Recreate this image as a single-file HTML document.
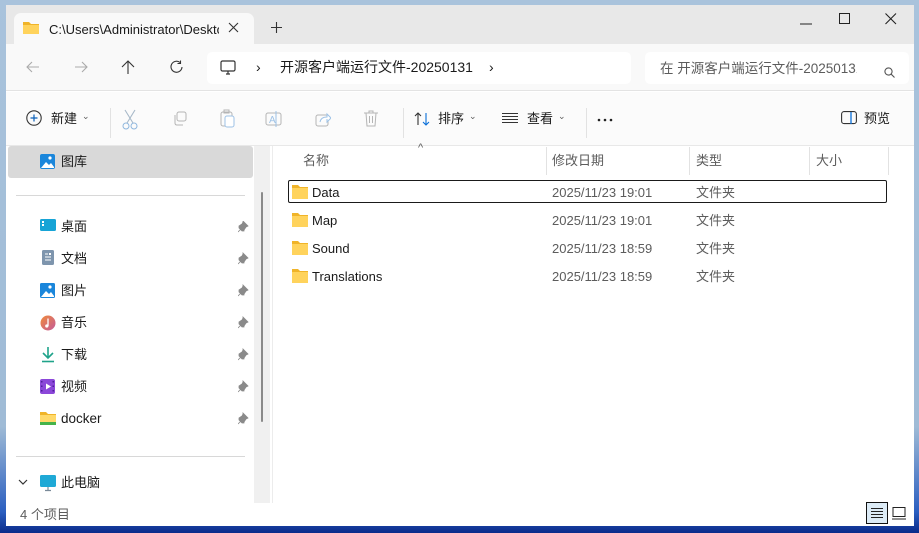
<!DOCTYPE html>
<html><head><meta charset="utf-8"><style>
*{margin:0;padding:0;box-sizing:border-box}
body{width:919px;height:533px;overflow:hidden;position:relative;font-family:"Liberation Sans","Noto Sans CJK SC",sans-serif;font-size:13px;color:#1a1a1a;background:linear-gradient(180deg,#a9c3dc 0%,#9fbbd6 80%,#2b5fc0 96%,#0a2a8a 100%)}
.a{position:absolute}
.win{left:6px;top:5px;width:908px;height:521px;background:#fff;overflow:hidden}
.title{left:0;top:0;width:908px;height:39px;background:#e8e8e8}
.tab{left:8px;top:8px;width:240px;height:32px;background:#f9f9f9;border-radius:7px 7px 0 0}
.nav{left:0;top:39px;width:908px;height:47px;background:#f9f9f9;border-bottom:1px solid #e3e3e3}
.box{background:#fff;border-radius:5px}
.tool{left:0;top:87px;width:908px;height:54px;background:#fbfbfb;border-bottom:1px solid #e8e8e8}
.t{position:absolute;white-space:nowrap;line-height:15px}
.g{color:#5c5c5c}
.sep{position:absolute;width:1px;background:#e2e2e2}
svg{position:absolute}
</style></head><body>
<div class="a win">
 <div class="a title"></div>
 <div class="a tab"></div>
 <svg style="left:17px;top:16px" width="16" height="13"><path d="M0 1h6l2 2h8v10H0z" fill="#f0b429"/><rect x="0" y="4" width="16" height="9" fill="#ffd35c"/></svg>
 <div class="t" style="left:43px;top:17px;width:170px;overflow:hidden">C:\Users\Administrator\Desktop</div>
 <svg style="left:222px;top:17px" width="11" height="11"><path d="M1 1L10 10M10 1L1 10" stroke="#333" stroke-width="1.1"/></svg>
 <svg style="left:265px;top:17px" width="11" height="11"><path d="M5.5 0V11M0 5.5H11" stroke="#333" stroke-width="1.1"/></svg>
 <svg style="left:794px;top:18px" width="12" height="2"><path d="M0 1H12" stroke="#222"/></svg>
 <svg style="left:833px;top:8px" width="12" height="12"><rect x="0.5" y="0.5" width="10" height="10" fill="none" stroke="#222"/></svg>
 <svg style="left:879px;top:8px" width="12" height="12"><path d="M0.5 0.5L11 11M11 0.5L0.5 11" stroke="#222" stroke-width="1.1"/></svg>

 <div class="a nav"></div>
 <svg style="left:20px;top:56px" width="14" height="12"><path d="M13 6H1M6 1L1 6L6 11" fill="none" stroke="#aaa" stroke-width="1.1"/></svg>
 <svg style="left:68px;top:56px" width="14" height="12"><path d="M1 6H13M8 1L13 6L8 11" fill="none" stroke="#aaa" stroke-width="1.1"/></svg>
 <svg style="left:115px;top:55px" width="14" height="14"><path d="M7 14V1M1 7L7 1L13 7" fill="none" stroke="#333" stroke-width="1.1"/></svg>
 <svg style="left:164px;top:55px" width="14" height="14"><path d="M12 7A5.5 5.5 0 1 1 10 2.5M10.5 0.5V3.5H7.5" fill="none" stroke="#333" stroke-width="1.1"/></svg>
 <div class="a box" style="left:201px;top:47px;width:424px;height:32px"></div>
 <svg style="left:214px;top:55px" width="17" height="16"><rect x="1" y="1" width="14" height="10" rx="1.5" fill="none" stroke="#333" stroke-width="1.2"/><path d="M6 14H10M8 11V14" stroke="#333" stroke-width="1.2"/></svg>
 <div class="t" style="left:250px;top:55px;font-size:14px">›</div>
 <div class="t" style="left:274px;top:55px;font-size:14px">开源客户端运行文件-20250131</div>
 <div class="t" style="left:483px;top:55px;font-size:14px">›</div>
 <div class="a box" style="left:639px;top:47px;width:264px;height:32px"></div>
 <div class="t g" style="left:654px;top:56px;font-size:13.5px;width:197px;overflow:hidden">在 开源客户端运行文件-20250131</div>
 <svg style="left:878px;top:62px" width="11" height="11"><circle cx="4.5" cy="4.5" r="3.6" fill="none" stroke="#555" stroke-width="1.1"/><path d="M7.2 7.2L10.5 10.5" stroke="#555" stroke-width="1.1"/></svg>

 <div class="a tool"></div>
 <svg style="left:20px;top:105px" width="17" height="17"><circle cx="8" cy="8" r="7.2" fill="none" stroke="#333" stroke-width="1.1"/><path d="M8 4.5V11.5M4.5 8H11.5" stroke="#0a5fb8" stroke-width="1.2"/></svg>
 <div class="t" style="left:45px;top:106px">新建</div>
 <div class="t g" style="left:76px;top:104px;font-size:9px">⌄</div>
 <div class="sep" style="left:104px;top:103px;height:30px"></div>
 <svg style="left:116px;top:104px" width="16" height="22"><path d="M3 1L11 14M13 1L5 14" stroke="#a7b8c8" stroke-width="1.1"/><circle cx="4" cy="17" r="3" fill="none" stroke="#8fb7de"/><circle cx="12" cy="17" r="3" fill="none" stroke="#8fb7de"/></svg>
 <svg style="left:166px;top:106px" width="16" height="16"><rect x="5" y="1" width="9" height="9" rx="2" fill="none" stroke="#b4b4b4"/><path d="M3 4V12Q3 14 5 14H11" fill="none" stroke="#b4b4b4"/></svg>
 <svg style="left:214px;top:104px" width="16" height="19"><rect x="1" y="3" width="11" height="14" rx="2" fill="none" stroke="#b4b4b4"/><rect x="5" y="7" width="9" height="11" rx="2" fill="#fff" stroke="#9ec2e6"/><rect x="4" y="1" width="5" height="3" fill="none" stroke="#b4b4b4"/></svg>
 <svg style="left:259px;top:105px" width="18" height="18"><rect x="1" y="3" width="15" height="12" rx="2" fill="none" stroke="#b4b4b4"/><text x="4" y="13" font-size="10" fill="#9ec2e6" font-family="Liberation Sans">A</text><path d="M11 1V17" stroke="#9ec2e6"/></svg>
 <svg style="left:309px;top:106px" width="16" height="16"><rect x="1" y="4" width="12" height="11" rx="2" fill="none" stroke="#b4b4b4"/><path d="M5 11Q6 6 12 6V3L16 7L12 11V8" fill="#fff" stroke="#9ec2e6"/></svg>
 <svg style="left:357px;top:105px" width="16" height="18"><path d="M1 3H15M6 3V1H10V3M3 3L4 16H12L13 3M6.5 6V13M9.5 6V13" fill="none" stroke="#b4b4b4"/></svg>
 <div class="sep" style="left:397px;top:103px;height:30px"></div>
 <svg style="left:408px;top:107px" width="17" height="14"><path d="M4 13V1M1 4L4 1L7 4" fill="none" stroke="#333" stroke-width="1.1"/><path d="M12 1V13M9 10L12 13L15 10" fill="none" stroke="#0a6fd8" stroke-width="1.1"/></svg>
 <div class="t" style="left:432px;top:106px">排序</div>
 <div class="t g" style="left:463px;top:104px;font-size:9px">⌄</div>
 <svg style="left:496px;top:108px" width="16" height="10"><path d="M0 .5H16M0 3.5H16M0 6.5H16M0 9.5H16" stroke="#333" stroke-width="0.9"/></svg>
 <div class="t" style="left:521px;top:106px">查看</div>
 <div class="t g" style="left:552px;top:104px;font-size:9px">⌄</div>
 <div class="sep" style="left:580px;top:103px;height:30px"></div>
 <svg style="left:591px;top:113px" width="16" height="4"><circle cx="2" cy="2" r="1.3" fill="#222"/><circle cx="8" cy="2" r="1.3" fill="#222"/><circle cx="14" cy="2" r="1.3" fill="#222"/></svg>
 <svg style="left:835px;top:106px" width="16" height="14"><rect x="0.6" y="0.6" width="14.8" height="12" rx="2.5" fill="none" stroke="#333" stroke-width="1.1"/><path d="M10 1V13" stroke="#0a6fd8" stroke-width="1.3"/></svg>
 <div class="t" style="left:858px;top:106px">预览</div>

 <!-- sidebar -->
 <div class="a" style="left:2px;top:141px;width:245px;height:32px;background:#d9d9d9;border-radius:3px"></div>
 <svg style="left:34px;top:149px" width="16" height="16"><rect x="0" y="0" width="15" height="15" rx="2" fill="#1a86db"/><path d="M1 14L6 8L9 11L11 9L14 13V14z" fill="#fff"/><circle cx="10" cy="4" r="1.6" fill="#fff"/></svg>
 <div class="t" style="left:55px;top:149px">图库</div>
 <div class="a" style="left:10px;top:190px;width:229px;height:1px;background:#d8d8d8"></div>
 <svg style="left:34px;top:214px" width="17" height="14"><rect x="0" y="0" width="16" height="12" rx="1.5" fill="#17a4d6"/><rect x="2" y="2" width="2" height="2" fill="#fff"/><rect x="2" y="5" width="2" height="2" fill="#fff"/></svg>
 <div class="t" style="left:55px;top:214px">桌面</div>
 <svg style="left:36px;top:245px" width="13" height="16"><rect x="0" y="0" width="12" height="15" rx="1.5" fill="#7e95ad"/><path d="M3 4H6M3 7H9M3 10H9" stroke="#fff"/><rect x="7" y="3" width="2" height="2" fill="#fff"/></svg>
 <div class="t" style="left:55px;top:246px">文档</div>
 <svg style="left:34px;top:278px" width="16" height="16"><rect x="0" y="0" width="15" height="15" rx="1.5" fill="#1a86db"/><path d="M1 14L6 8L9 11L11 9L14 13V14z" fill="#fff"/><circle cx="10" cy="4" r="1.6" fill="#fff"/></svg>
 <div class="t" style="left:55px;top:278px">图片</div>
 <svg style="left:34px;top:310px" width="16" height="16"><defs><linearGradient id="m" x1="0" y1="0" x2="1" y2="1"><stop offset="0" stop-color="#f08a3a"/><stop offset="1" stop-color="#c45a9a"/></linearGradient></defs><circle cx="8" cy="8" r="7.5" fill="url(#m)"/><path d="M8 3.5V11" stroke="#fff" stroke-width="1.3"/><circle cx="6.8" cy="11" r="1.6" fill="#fff"/></svg>
 <div class="t" style="left:55px;top:310px">音乐</div>
 <svg style="left:35px;top:341px" width="14" height="17"><path d="M7 1V12M2 7L7 12L12 7" fill="none" stroke="#1fa38a" stroke-width="1.6"/><path d="M1 15.5H13" stroke="#1fa38a" stroke-width="1.6"/></svg>
 <div class="t" style="left:55px;top:342px">下载</div>
 <svg style="left:34px;top:374px" width="16" height="16"><rect x="0" y="0" width="15" height="15" rx="2" fill="#8b47d9"/><path d="M6 4.5L11 7.5L6 10.5z" fill="#fff"/><rect x="1" y="2" width="1.5" height="1.5" fill="#4e1e99"/><rect x="1" y="6.5" width="1.5" height="1.5" fill="#4e1e99"/><rect x="1" y="11" width="1.5" height="1.5" fill="#4e1e99"/><rect x="12.5" y="2" width="1.5" height="1.5" fill="#4e1e99"/><rect x="12.5" y="6.5" width="1.5" height="1.5" fill="#4e1e99"/><rect x="12.5" y="11" width="1.5" height="1.5" fill="#4e1e99"/></svg>
 <div class="t" style="left:55px;top:374px">视频</div>
 <svg style="left:34px;top:406px" width="17" height="15"><path d="M0 1h6l2 2h8v11H0z" fill="#f0b429"/><rect x="0" y="4" width="16" height="8" fill="#ffd96a"/><rect x="0" y="11" width="16" height="3" fill="#45b34a"/></svg>
 <div class="t" style="left:55px;top:406px;font-size:13.5px">docker</div>
 <svg style="left:232px;top:216px" width="11" height="204"><defs><path id="p" d="M5 0L10 5L8 6L6 9L6 10L4 10L1 7L1 5L4 3L5 1zM3 8L0 11" fill="#8a8a8a" stroke="#8a8a8a" stroke-width="0.8"/></defs><use href="#p"/><use href="#p" y="32"/><use href="#p" y="64"/><use href="#p" y="96"/><use href="#p" y="128"/><use href="#p" y="160"/><use href="#p" y="192"/></svg>
 <div class="a" style="left:10px;top:451px;width:229px;height:1px;background:#d8d8d8"></div>
 <svg style="left:12px;top:474px" width="10" height="7"><path d="M1 1L5 5L9 1" fill="none" stroke="#333" stroke-width="1.2"/></svg>
 <svg style="left:34px;top:470px" width="17" height="17"><rect x="0" y="0" width="16" height="12" rx="1.5" fill="#1fa9d6"/><path d="M8 12V15M5 15.5H11" stroke="#7a8a99" stroke-width="1.2"/></svg>
 <div class="t" style="left:55px;top:470px">此电脑</div>
 <div class="a" style="left:248px;top:141px;width:16px;height:357px;background:#f0f0f0"></div>
 <div class="a" style="left:255px;top:187px;width:2px;height:230px;background:#8a8a8a;border-radius:1px"></div>
 <div class="a" style="left:266px;top:141px;width:1px;height:357px;background:#ececec"></div>

 <!-- files -->
 <div class="t g" style="left:412px;top:136px;font-size:11px">^</div>
 <div class="t g" style="left:297px;top:148px">名称</div>
 <div class="sep" style="left:540px;top:142px;height:28px"></div>
 <div class="t g" style="left:546px;top:148px">修改日期</div>
 <div class="sep" style="left:683px;top:142px;height:28px"></div>
 <div class="t g" style="left:690px;top:148px">类型</div>
 <div class="sep" style="left:803px;top:142px;height:28px"></div>
 <div class="t g" style="left:810px;top:148px">大小</div>
 <div class="sep" style="left:882px;top:142px;height:28px"></div>
 <div class="a" style="left:282px;top:175px;width:599px;height:23px;border:1px solid #1a1a1a;border-radius:2px"></div>

 <svg style="left:286px;top:180px" width="17" height="14"><path d="M0 0h6l2 2h8v12H0z" fill="#f0b429"/><rect x="0" y="3" width="16" height="11" fill="#ffd35c"/></svg>
 <div class="t" style="left:306px;top:180px">Data</div><div class="t g" style="left:546px;top:180px">2025/11/23 19:01</div><div class="t g" style="left:690px;top:180px">文件夹</div>
 <svg style="left:286px;top:208px" width="17" height="14"><path d="M0 0h6l2 2h8v12H0z" fill="#f0b429"/><rect x="0" y="3" width="16" height="11" fill="#ffd35c"/></svg>
 <div class="t" style="left:306px;top:208px">Map</div><div class="t g" style="left:546px;top:208px">2025/11/23 19:01</div><div class="t g" style="left:690px;top:208px">文件夹</div>
 <svg style="left:286px;top:236px" width="17" height="14"><path d="M0 0h6l2 2h8v12H0z" fill="#f0b429"/><rect x="0" y="3" width="16" height="11" fill="#ffd35c"/></svg>
 <div class="t" style="left:306px;top:236px">Sound</div><div class="t g" style="left:546px;top:236px">2025/11/23 18:59</div><div class="t g" style="left:690px;top:236px">文件夹</div>
 <svg style="left:286px;top:264px" width="17" height="14"><path d="M0 0h6l2 2h8v12H0z" fill="#f0b429"/><rect x="0" y="3" width="16" height="11" fill="#ffd35c"/></svg>
 <div class="t" style="left:306px;top:264px">Translations</div><div class="t g" style="left:546px;top:264px">2025/11/23 18:59</div><div class="t g" style="left:690px;top:264px">文件夹</div>

 <div class="t g" style="left:14px;top:502px">4 个项目</div>
 <div class="a" style="left:860px;top:497px;width:22px;height:22px;border:1px solid #111;background:#dcebf6"></div>
 <svg style="left:865px;top:503px" width="12" height="10"><path d="M0 .5H12M0 3.5H12M0 6.5H12M0 9.5H12" stroke="#222"/></svg>
 <svg style="left:886px;top:502px" width="14" height="13"><rect x="1" y="0.5" width="12" height="9" fill="none" stroke="#222"/><path d="M0 12H14" stroke="#222"/></svg>
</div>
</body></html>
